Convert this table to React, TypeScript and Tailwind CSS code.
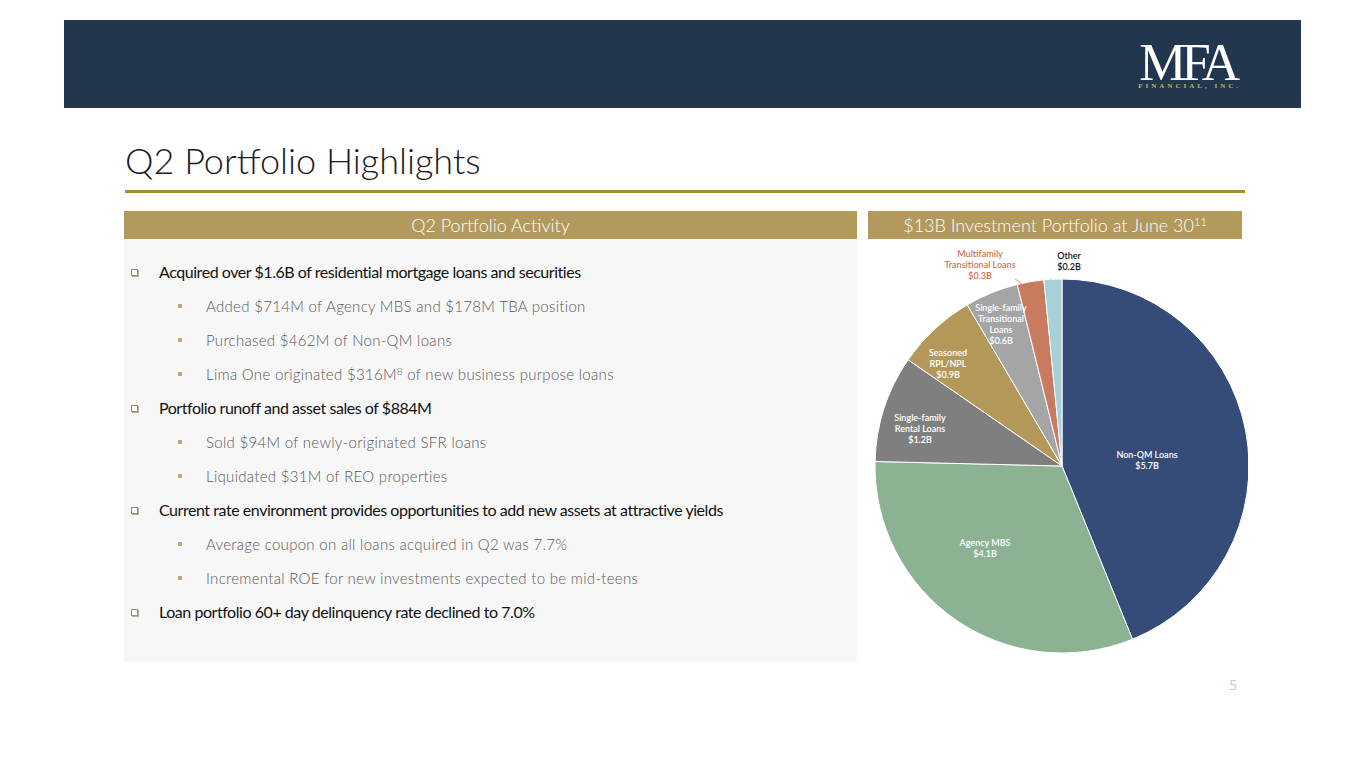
import React from "react";

const SLICES = [
  { name: "Non-QM Loans", v: 5.7, color: "#354b78" },
  { name: "Agency MBS", v: 4.1, color: "#8cb294" },
  { name: "SFR", v: 1.2, color: "#7f7f7f" },
  { name: "Seasoned", v: 0.9, color: "#b3985a" },
  { name: "SF Transitional", v: 0.6, color: "#a5a5a5" },
  { name: "MF Transitional", v: 0.3, color: "#c97b5f" },
  { name: "Other", v: 0.2, color: "#a8d0d8" },
];

const LABELS: { x: number; y: number; lines: string[]; fill: string }[] = [
  { x: 279, y: 217, lines: ["Non-QM Loans", "$5.7B"], fill: "#ffffff" },
  { x: 117, y: 305, lines: ["Agency MBS", "$4.1B"], fill: "#ffffff" },
  { x: 52, y: 180, lines: ["Single-family", "Rental Loans", "$1.2B"], fill: "#ffffff" },
  { x: 80, y: 115, lines: ["Seasoned", "RPL/NPL", "$0.9B"], fill: "#ffffff" },
  { x: 133, y: 70, lines: ["Single-family", "Transitional", "Loans", "$0.6B"], fill: "#ffffff" },
  { x: 112, y: 16, lines: ["Multifamily", "Transitional Loans", "$0.3B"], fill: "#c8775a" },
  { x: 201, y: 18, lines: ["Other", "$0.2B"], fill: "#111111" },
];

type Item = { text: string; main: boolean };

const ITEMS: Item[] = [
  { text: "Acquired over $1.6B of residential mortgage loans and securities", main: true },
  { text: "Added $714M of Agency MBS and $178M TBA position", main: false },
  { text: "Purchased $462M of Non-QM loans", main: false },
  { text: "Lima One originated $316M|8| of new business purpose loans", main: false },
  { text: "Portfolio runoff and asset sales of $884M", main: true },
  { text: "Sold $94M of newly-originated SFR loans", main: false },
  { text: "Liquidated $31M of REO properties", main: false },
  { text: "Current rate environment provides opportunities to add new assets at attractive yields", main: true },
  { text: "Average coupon on all loans acquired in Q2 was 7.7%", main: false },
  { text: "Incremental ROE for new investments expected to be mid-teens", main: false },
  { text: "Loan portfolio 60+ day delinquency rate declined to 7.0%", main: true },
];

function withSup(t: string) {
  const parts = t.split("|");
  if (parts.length < 3) return t;
  return (
    <>
      {parts[0]}
      <sup className="text-[10px]">{parts[1]}</sup>
      {parts[2]}
    </>
  );
}

function Pie() {
  const cx = 194;
  const cy = 227;
  const r = 187;
  const total = SLICES.reduce((s, d) => s + d.v, 0);
  let acc = 0;
  const pt = (a: number) => [cx + r * Math.sin(a), cy - r * Math.cos(a)];
  return (
    <svg width={380} height={423} className="block">
      {SLICES.map((s) => {
        const a0 = (acc / total) * Math.PI * 2;
        acc += s.v;
        const a1 = (acc / total) * Math.PI * 2;
        const [x0, y0] = pt(a0);
        const [x1, y1] = pt(a1);
        const large = a1 - a0 > Math.PI ? 1 : 0;
        return (
          <path
            key={s.name}
            d={`M${cx},${cy} L${x0},${y0} A${r},${r} 0 ${large} 1 ${x1},${y1} Z`}
            fill={s.color}
            stroke="#ffffff"
            strokeWidth={1}
          />
        );
      })}
      <path d="M147,40 Q152,42 156,48" stroke="#c97b5f" strokeWidth={0.8} fill="none" />
      <path d="M184,39 Q180,41 178,46" stroke="#a8d0d8" strokeWidth={0.8} fill="none" />
      {LABELS.map((l) => (
        <text
          key={l.lines.join()}
          fill={l.fill}
          fontSize={9}
          fontWeight={600}
          fontFamily="Lato, 'Open Sans', sans-serif"
          textAnchor="middle"
          dominantBaseline="middle"
        >
          {l.lines.map((ln, i) => (
            <tspan key={i} x={l.x} y={l.y + i * 11}>
              {ln}
            </tspan>
          ))}
        </text>
      ))}
    </svg>
  );
}

export default function App() {
  return (
    <div className="relative w-[1365px] h-[768px] bg-white font-['Lato','Open_Sans',sans-serif] overflow-hidden">
      {/* header bar */}
      <div className="ml-[64px] mt-[20px] w-[1237px] h-[88px] bg-[#22374d] flex justify-end">
        <div className="mr-[60px] mt-[22px] flex flex-col items-center">
          <div className="font-['Liberation_Serif',serif] text-white text-[53px] leading-[40px] tracking-[-5px] pr-[5px]">
            MFA
          </div>
          <div className="font-['Liberation_Serif',serif] text-[#c8b35a] text-[7px] leading-[8px] tracking-[3px] font-bold">
            FINANCIAL, INC.
          </div>
        </div>
      </div>

      {/* title */}
      <div className="ml-[125px] mt-[32px] text-[36px] leading-[40px] font-light text-[#1a1a1a]">
        Q2 Portfolio Highlights
      </div>
      <div className="ml-[125px] mt-[10px] w-[1120px] h-[3px] bg-[#a88a2c]" />

      {/* body */}
      <div className="ml-[124px] mt-[18px] flex gap-[11px]">
        <div className="w-[733px] flex flex-col">
          <div className="h-[28px] bg-[#b3995c] flex items-center justify-center text-white text-[18px] font-light">
            Q2 Portfolio Activity
          </div>
          <div className="h-[423px] bg-[#f7f7f7] pt-[16px]">
            {ITEMS.map((it) =>
              it.main ? (
                <div key={it.text} className="h-[34px] flex items-center">
                  <span className="ml-[7px] w-[7px] h-[7px] border border-[#9c8c6c] bg-white shadow-[1px_1px_0_#b9ad98]" />
                  <span className="ml-[21px] text-[16px] text-[#111111] tracking-[-0.45px]">{it.text}</span>
                </div>
              ) : (
                <div key={it.text} className="h-[34px] flex items-center">
                  <span className="ml-[54px] w-[4px] h-[4px] bg-[#c0a870]" />
                  <span className="ml-[24px] text-[15px] font-light text-[#595959] tracking-[0.3px]">
                    {withSup(it.text)}
                  </span>
                </div>
              )
            )}
          </div>
        </div>
        <div className="w-[374px] flex flex-col">
          <div className="h-[28px] bg-[#b3995c] flex items-center justify-center text-white text-[18px] font-light">
            <span>
              $13B Investment Portfolio at June 30<sup className="text-[11px]">11</sup>
            </span>
          </div>
          <Pie />
        </div>
      </div>

      {/* page number */}
      <div className="absolute left-[1229px] top-[674px] text-[14px] font-light text-[#a6a6a6]">5</div>
    </div>
  );
}
